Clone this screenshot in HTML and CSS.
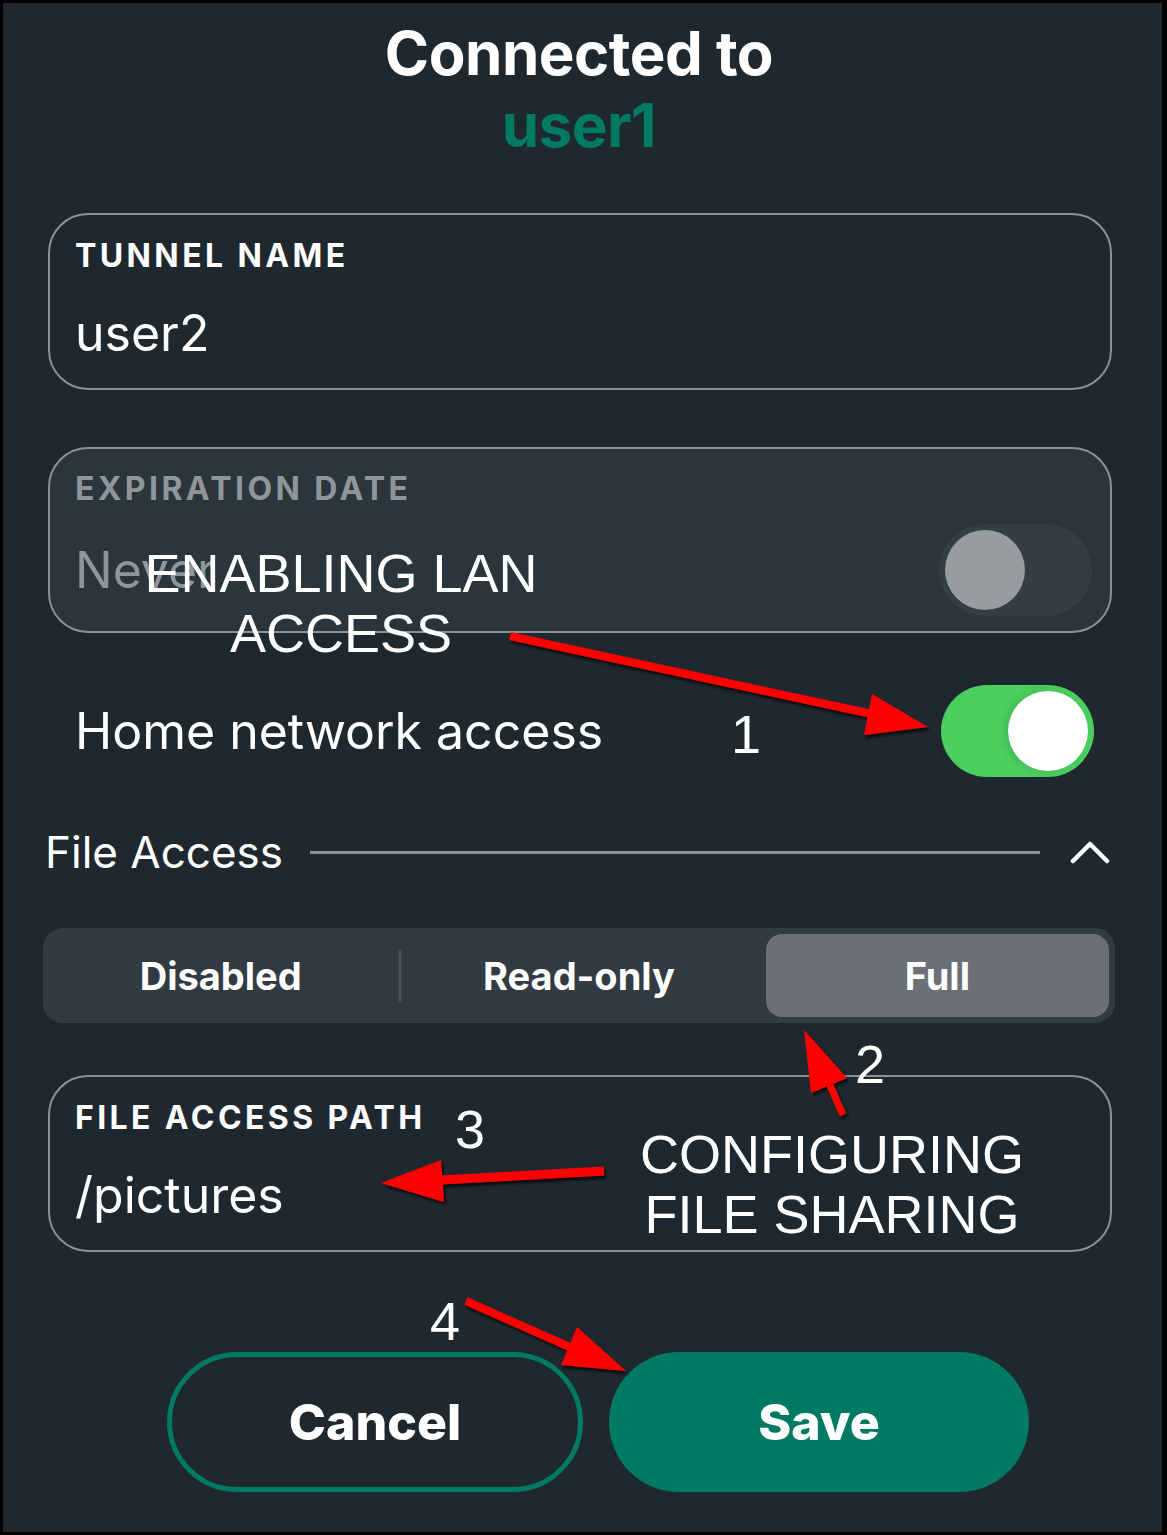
FILE: index.html
```html
<!DOCTYPE html>
<html lang="en">
<head>
  <meta charset="UTF-8">
  <meta name="viewport" content="width=device-width, initial-scale=1.0">
  <title>Tunnel settings</title>
  <link rel="stylesheet" href="styles.css">
</head>
<body>
  <div class="screen">
    <div class="title">
      <div>Connected to</div>
      <div class="peer">user1</div>
    </div>

    <div class="field">
      <div class="field-label">TUNNEL NAME</div>
      <div class="field-value">user2</div>
    </div>

    <div class="field field-muted">
      <div class="field-label">EXPIRATION DATE</div>
      <div class="field-row">
        <span class="field-value">Never</span>
        <span class="switch"><span class="knob"></span></span>
      </div>
    </div>

    <div class="setting-row">
      <span>Home network access</span>
      <span class="switch on"><span class="knob"></span></span>
    </div>

    <div class="section-head">
      <span>File Access</span>
      <span class="section-rule"></span>
      <svg class="chevron" width="40" height="26" viewBox="0 0 40 26">
        <polyline points="3,22 20,5 37,22" fill="none" stroke="#fff" stroke-width="4.5" stroke-linecap="round" stroke-linejoin="round"/>
      </svg>
    </div>

    <div class="segmented">
      <div class="segment">Disabled</div>
      <div class="segment divided">Read-only</div>
      <div class="segment active">Full</div>
    </div>

    <div class="field">
      <div class="field-label">FILE ACCESS PATH</div>
      <div class="field-value">/pictures</div>
    </div>

    <div class="actions">
      <button class="btn btn-outline">Cancel</button>
      <button class="btn btn-solid">Save</button>
    </div>

    <!-- screenshot annotations -->
    <div class="annotations">
      <svg class="arrows" width="1167" height="1535" viewBox="0 0 1167 1535">
        <defs>
          <filter id="shadow" x="-20%" y="-20%" width="140%" height="140%">
            <feDropShadow dx="2" dy="3" stdDeviation="1.5" flood-color="#000" flood-opacity="0.75"/>
          </filter>
        </defs>
        <g fill="#ff0000" stroke="#ff0000" filter="url(#shadow)">
          <line x1="510" y1="636" x2="872" y2="714" stroke-width="8"/>
          <polygon points="928,727 872,694 864,735" stroke="none"/>

          <line x1="843" y1="1115" x2="829" y2="1083" stroke-width="7"/>
          <polygon points="804,1030 811,1093 847,1078" stroke="none"/>

          <line x1="604" y1="1171" x2="440" y2="1180" stroke-width="9"/>
          <polygon points="381,1183 441,1160 444,1202" stroke="none"/>

          <line x1="466" y1="1301" x2="572" y2="1348" stroke-width="8"/>
          <polygon points="626,1371 577,1327 561,1365" stroke="none"/>
        </g>
      </svg>
      <div class="note note-lan">ENABLING LAN<br>ACCESS</div>
      <div class="note note-files">CONFIGURING<br>FILE SHARING</div>
      <div class="note step-1">1</div>
      <div class="note step-2">2</div>
      <div class="note step-3">3</div>
      <div class="note step-4">4</div>
    </div>
  </div>
</body>
</html>
```

FILE: styles.css
```css
body {
  margin: 0;
  background-color: #000;
}
.screen {
  position: relative;
  width: 1167px;
  height: 1535px;
  box-sizing: border-box;
  border: 3px solid #000;
  border-right-width: 5px;
  padding: 14px 47px 0 40px;
  background-color: #1f282f;
  color: #fff;
  font-family: Inter, "Noto Sans", sans-serif;
}
.title {
  text-align: center;
  font-size: 60px;
  font-weight: 700;
  line-height: 72px;
  letter-spacing: -0.5px;
}
.title .peer {
  color: #007a62;
}
.field {
  margin: 52px 3px 0 5px;
  padding: 22px 18px 27px 25px;
  border: 2px solid #8b9297;
  border-radius: 40px;
}
.field-label {
  font-size: 32px;
  font-weight: 700;
  line-height: 38px;
  letter-spacing: 3.4px;
}
.field-value {
  margin-top: 30px;
  display: block;
  font-size: 50px;
  line-height: 56px;
}
.field-muted {
  margin-top: 57px;
  padding: 21px 18px 15px 25px;
  background-color: #2a353c;
  color: #8f969b;
}
.field-row {
  display: flex;
  justify-content: space-between;
  align-items: center;
  margin-top: 16px;
}
.field-row .field-value {
  margin-top: 0;
}
.switch {
  position: relative;
  display: inline-block;
  width: 153px;
  height: 92px;
  border-radius: 46px;
  background-color: #343e45;
  flex-shrink: 0;
}
.switch .knob {
  position: absolute;
  top: 6px;
  left: 6px;
  width: 80px;
  height: 80px;
  border-radius: 50%;
  background-color: #969ca0;
}
.switch.on {
  background-color: #4bcf5e;
}
.switch.on .knob {
  left: auto;
  right: 6px;
  background-color: #fff;
  box-shadow: -3px 0 8px rgba(0, 0, 0, 0.12);
}
.setting-row {
  display: flex;
  justify-content: space-between;
  align-items: center;
  margin-top: 52px;
  padding: 0 21px 0 32px;
  font-size: 50px;
}
.section-head {
  display: flex;
  align-items: center;
  height: 50px;
  margin-top: 50px;
  padding: 0 5px 0 2px;
  font-size: 44px;
}
.section-rule {
  flex: 1;
  height: 3px;
  margin: 0 30px 0 27px;
  background-color: #8b9297;
}
.chevron {
  display: block;
}
.segmented {
  display: grid;
  grid-template-columns: 1fr 1fr 1fr;
  margin-top: 51px;
  padding: 6px;
  border-radius: 20px;
  background-color: #323a42;
}
.segment {
  position: relative;
  height: 83px;
  display: flex;
  align-items: center;
  justify-content: center;
  font-size: 38px;
  font-weight: 700;
  border-radius: 16px;
}
.segment:first-child {
  padding-right: 10px;
}
.segment.divided:before {
  content: "";
  position: absolute;
  left: -3px;
  top: 16px;
  bottom: 15px;
  width: 2px;
  background-color: #4b535a;
}
.segment.active {
  background-color: #6b6f77;
  margin-left: 10px;
}
.actions {
  display: flex;
  gap: 26px;
  margin-top: 100px;
  padding-left: 124px;
}
.btn {
  height: 140px;
  border-radius: 70px;
  font-family: Inter, "Noto Sans", sans-serif;
  font-size: 50px;
  font-weight: 800;
  color: #fff;
  cursor: pointer;
}
.btn-outline {
  width: 416px;
  border: 5px solid #007a62;
  background-color: transparent;
}
.btn-solid {
  width: 420px;
  border: none;
  background-color: #007a62;
}
.annotations {
  position: absolute;
  top: -3px;
  left: -3px;
  width: 1167px;
  height: 1535px;
  pointer-events: none;
}
.arrows {
  position: absolute;
  top: 0;
  left: 0;
}
.note {
  position: absolute;
  transform: translateX(-50%);
  font-family: "Liberation Sans", Arial, sans-serif;
  font-size: 54px;
  line-height: 60px;
  color: #fff;
  text-align: center;
  white-space: nowrap;
}
.note-lan {
  left: 341px;
  top: 543px;
}
.note-files {
  left: 832px;
  top: 1124px;
}
.step-1 {
  left: 746px;
  top: 704px;
}
.step-2 {
  left: 870px;
  top: 1034px;
}
.step-3 {
  left: 470px;
  top: 1099px;
}
.step-4 {
  left: 445px;
  top: 1291px;
}
```
